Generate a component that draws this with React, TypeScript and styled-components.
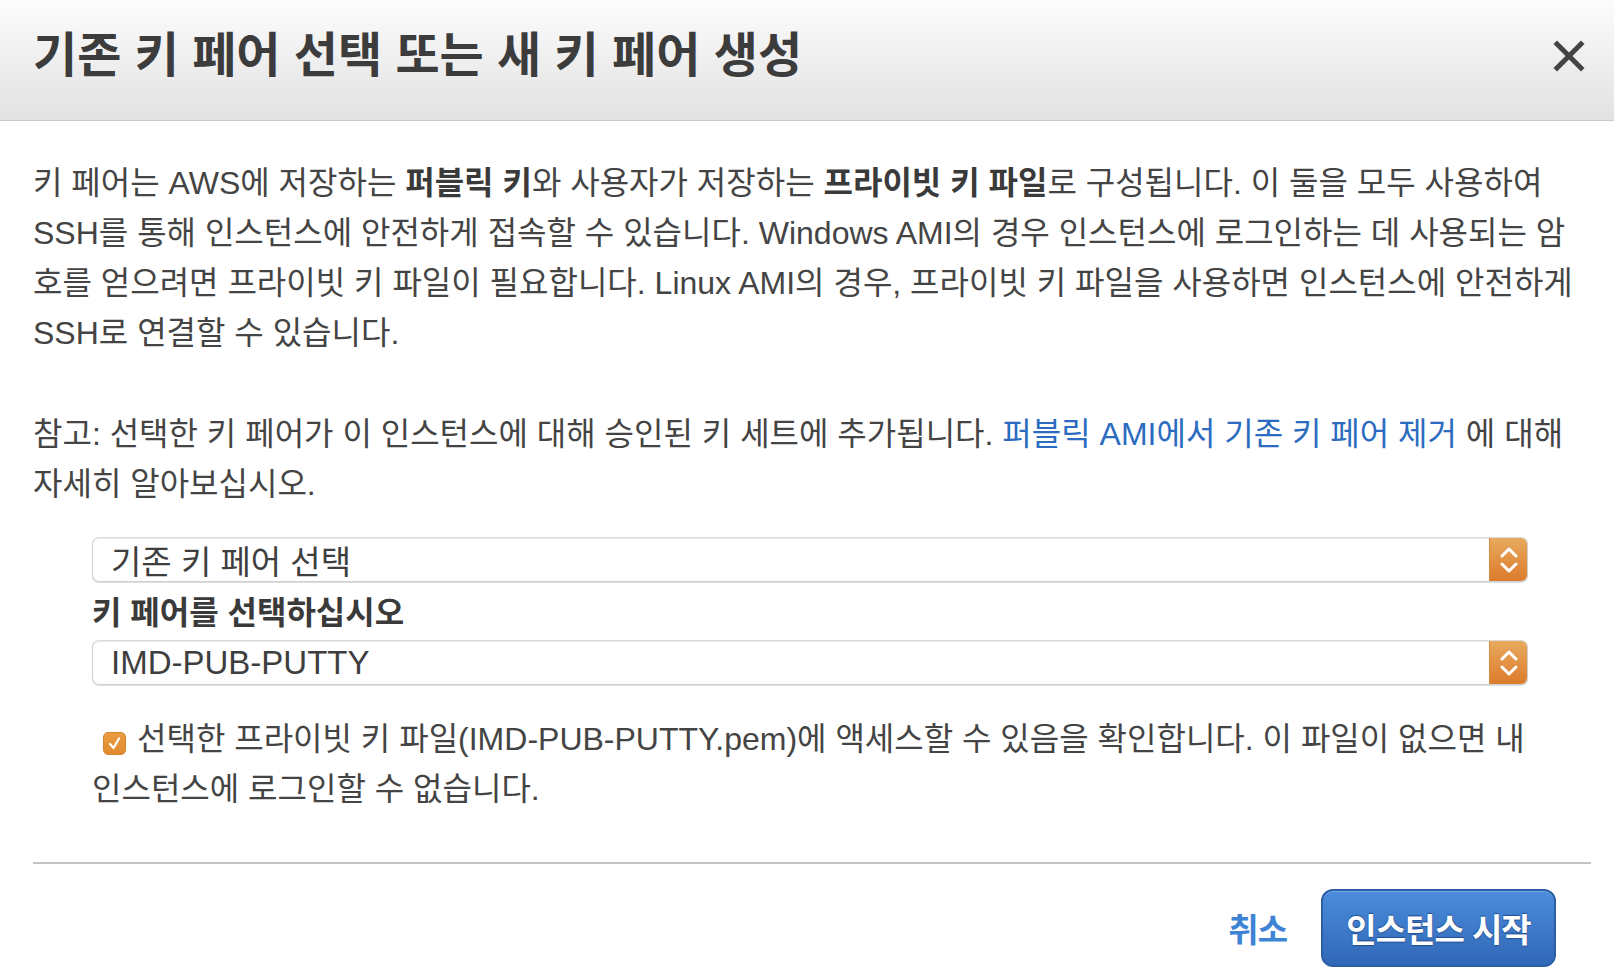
import React from "react";
import styled, { createGlobalStyle } from "styled-components";

const GlobalStyle = createGlobalStyle`
  html, body {
    margin: 0;
    padding: 0;
    background: #ffffff;
  }
  body {
    font-family: "Liberation Sans", "Noto Sans CJK KR", sans-serif;
    color: #444444;
  }
  * { box-sizing: border-box; }
`;

const Dialog = styled.div`
  width: 1614px;
  height: 976px;
  overflow: hidden;
  display: flex;
  flex-direction: column;
  background: #ffffff;
`;

const Header = styled.header`
  height: 121px;
  flex: none;
  display: flex;
  align-items: center;
  justify-content: space-between;
  padding: 0 29px 8px 33px;
  background: linear-gradient(#fcfcfc, #e2e2e2);
  border-bottom: 1px solid #c9c9c9;
`;

const Title = styled.h1`
  margin: 0;
  font-size: 48px;
  font-weight: 700;
  color: #3c3c3c;
  line-height: 60px;
`;

const CloseButton = styled.button`
  width: 32px;
  height: 32px;
  padding: 0;
  border: none;
  background: transparent;
  display: flex;
  align-items: center;
  justify-content: center;
  cursor: pointer;
`;

const Body = styled.main`
  flex: 1;
  padding: 37px 23px 0 33px;
  display: flex;
  flex-direction: column;
`;

const Paragraph = styled.p<{ $gap?: number }>`
  margin: 0 0 ${(p) => p.$gap ?? 0}px 0;
  font-size: 32px;
  line-height: 50px;
  color: #444444;
  word-break: keep-all;
  white-space: nowrap;
`;

const Strong = styled.strong`
  font-weight: 700;
  color: #3a3a3a;
`;

const Link = styled.a`
  color: #2c6cc0;
  text-decoration: none;
`;

const FormArea = styled.div`
  margin: 28px 0 0 59px;
  display: flex;
  flex-direction: column;
`;

const SelectBox = styled.div<{ $gap?: number }>`
  width: 1436px;
  height: 45px;
  margin-top: ${(p) => p.$gap ?? 0}px;
  display: flex;
  align-items: stretch;
  border: 1px solid #cfcfcf;
  border-top-color: #dadada;
  border-radius: 7px;
  background: #ffffff;
  box-shadow: inset 0 2px 1px -1px #e6e6e6, 0 1px 0 #e0e0e0;
  overflow: hidden;
`;

const SelectValue = styled.div`
  flex: 1;
  display: flex;
  align-items: center;
  padding-left: 18px;
  font-size: 33px;
  color: #3e3e3e;
  white-space: nowrap;
`;

const SelectArrow = styled.div`
  width: 38px;
  flex: none;
  display: flex;
  align-items: center;
  justify-content: center;
  background: linear-gradient(#e8aa5d, #dc7b2d);
  border-left: 1px solid #d68b3c;
`;

const FieldLabel = styled.div`
  margin-top: 6px;
  font-size: 32px;
  line-height: 50px;
  font-weight: 700;
  color: #3a3a3a;
`;

const CheckText = styled.label`
  display: block;
  margin-top: 29px;
  font-size: 32px;
  line-height: 50px;
  color: #444444;
  white-space: nowrap;
`;

const CheckBox = styled.span`
  display: inline-flex;
  align-items: center;
  justify-content: center;
  width: 23px;
  height: 23px;
  margin: 0 11px 0 11px;
  vertical-align: -1px;
  border-radius: 5px;
  background: linear-gradient(#eb9d42, #e08a2e);
  border: 1px solid #d3852f;
`;

const Divider = styled.hr`
  margin: 48px 0 0 0;
  border: none;
  height: 2px;
  background: #c2c2c2;
`;

const Footer = styled.footer`
  margin-top: 25px;
  padding-right: 35px;
  display: flex;
  justify-content: flex-end;
  align-items: center;
  gap: 34px;
`;

const CancelLink = styled.a`
  font-size: 33px;
  font-weight: 700;
  letter-spacing: -1px;
  color: #3f83d4;
  text-decoration: none;
  cursor: pointer;
`;

const PrimaryButton = styled.button`
  width: 235px;
  height: 78px;
  border-radius: 12px;
  border: 2px solid #2c5ea6;
  background: linear-gradient(#4b8cdc, #3068b6);
  box-shadow: inset 0 1px 0 rgba(255, 255, 255, 0.25);
  font-family: "Liberation Sans", "Noto Sans CJK KR", sans-serif;
  font-size: 33px;
  font-weight: 700;
  letter-spacing: -1px;
  color: #ffffff;
  text-shadow: 0 -1px 1px #1f4c8e, 0 1px 1px rgba(20, 50, 100, 0.5);
  cursor: pointer;
  padding: 0;
`;

const Chevrons = () => (
  <svg width="18" height="28" viewBox="0 0 18 28" fill="none">
    <polyline points="2,10 9,3 16,10" stroke="#fff" strokeWidth="3" strokeLinecap="round" strokeLinejoin="round" />
    <polyline points="2,18 9,25 16,18" stroke="#fff" strokeWidth="3" strokeLinecap="round" strokeLinejoin="round" />
  </svg>
);

const Select = ({ value, gap }: { value: string; gap?: number }) => (
  <SelectBox $gap={gap}>
    <SelectValue>{value}</SelectValue>
    <SelectArrow>
      <Chevrons />
    </SelectArrow>
  </SelectBox>
);

export default function App() {
  return (
    <>
      <GlobalStyle />
      <Dialog>
        <Header>
          <Title>기존 키 페어 선택 또는 새 키 페어 생성</Title>
          <CloseButton aria-label="닫기">
            <svg width="32" height="32" viewBox="0 0 32 32">
              <line x1="4" y1="4" x2="28" y2="28" stroke="#444" strokeWidth="5" strokeLinecap="square" />
              <line x1="28" y1="4" x2="4" y2="28" stroke="#444" strokeWidth="5" strokeLinecap="square" />
            </svg>
          </CloseButton>
        </Header>
        <Body>
          <Paragraph $gap={51}>
            키 페어는 AWS에 저장하는 <Strong>퍼블릭 키</Strong>와 사용자가 저장하는{" "}
            <Strong>프라이빗 키 파일</Strong>로 구성됩니다. 이 둘을 모두 사용하여
            <br />
            SSH를 통해 인스턴스에 안전하게 접속할 수 있습니다. Windows AMI의 경우 인스턴스에 로그인하는 데 사용되는 암
            <br />
            호를 얻으려면 프라이빗 키 파일이 필요합니다. Linux AMI의 경우, 프라이빗 키 파일을 사용하면 인스턴스에 안전하게
            <br />
            SSH로 연결할 수 있습니다.
          </Paragraph>
          <Paragraph>
            참고: 선택한 키 페어가 이 인스턴스에 대해 승인된 키 세트에 추가됩니다.{" "}
            <Link href="#">퍼블릭 AMI에서 기존 키 페어 제거</Link> 에 대해
            <br />
            자세히 알아보십시오.
          </Paragraph>
          <FormArea>
            <Select value="기존 키 페어 선택" />
            <FieldLabel>키 페어를 선택하십시오</FieldLabel>
            <Select value="IMD-PUB-PUTTY" gap={2} />
            <CheckText>
              <CheckBox>
                <svg width="15" height="15" viewBox="0 0 15 15" fill="none">
                  <polyline points="3,8 6.5,12 12,2.5" stroke="#fff" strokeWidth="2.2" strokeLinecap="round" strokeLinejoin="round" />
                </svg>
              </CheckBox>
              선택한 프라이빗 키 파일(IMD-PUB-PUTTY.pem)에 액세스할 수 있음을 확인합니다. 이 파일이 없으면 내
              <br />
              인스턴스에 로그인할 수 없습니다.
            </CheckText>
          </FormArea>
          <Divider />
          <Footer>
            <CancelLink href="#">취소</CancelLink>
            <PrimaryButton>인스턴스 시작</PrimaryButton>
          </Footer>
        </Body>
      </Dialog>
    </>
  );
}
